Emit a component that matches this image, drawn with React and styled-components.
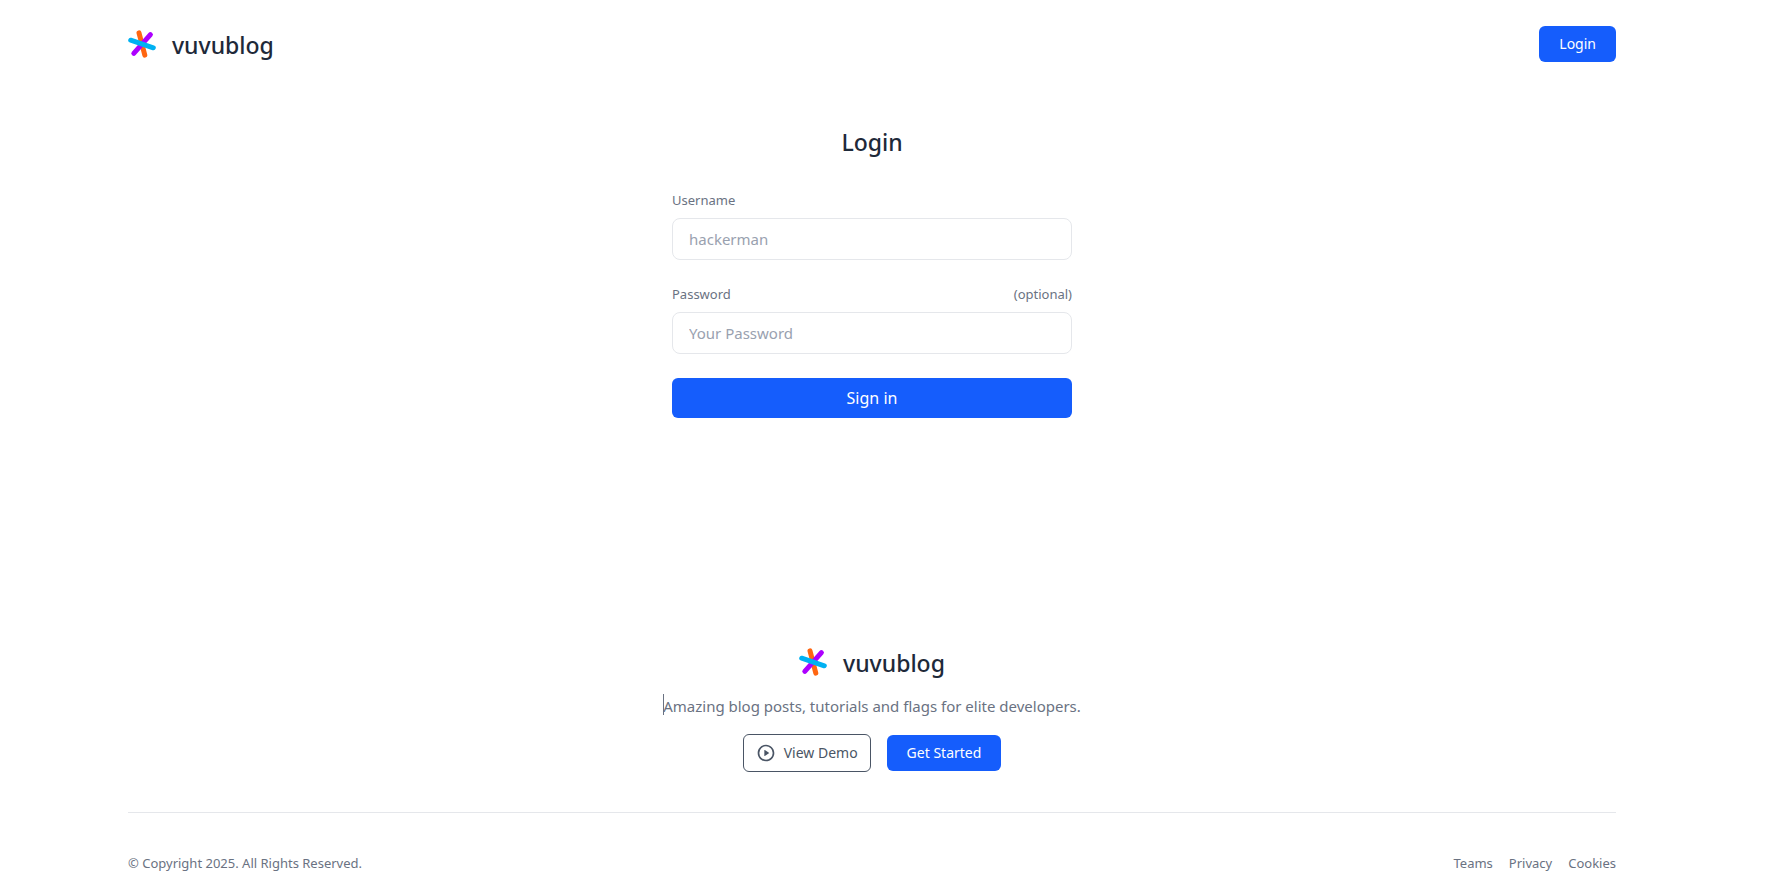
import React, { useState } from "react";
import styled, { createGlobalStyle } from "styled-components";

const GlobalStyle = createGlobalStyle`
  *, *::before, *::after {
    box-sizing: border-box;
  }

  body {
    margin: 0;
    background-color: #fff;
    font-family: "Segoe UI", "Noto Sans", "Open Sans", sans-serif;
    font-size: 15px;
    line-height: 24px;
    color: #6a7282;
  }

  button, input {
    font: inherit;
  }
`

const Page = styled.div`
  padding-right: 27px;
`

const Container = styled.div`
  max-width: 1536px;
  margin: 0 auto;
  padding: 0 24px;
`

const Header = styled.header`
  display: flex;
  align-items: center;
  justify-content: space-between;
  padding: 24px 0;
`

const Brand = styled.a`
  display: inline-flex;
  align-items: center;
  gap: 16px;
  height: 40px;
  color: #1e2939;
  font-size: 23px;
  font-weight: 500;
  text-decoration: none;
`

const BrandName = styled.span`
  padding-top: 2px;
`

const LogoIcon = styled.svg`
  width: 28px;
  height: 28px;
  fill: none;
  stroke-width: 5;
  stroke-linecap: round;
`

const Button = styled.button`
  height: 36px;
  padding: 0 20px;
  border: none;
  border-radius: 6px;
  background-color: #155dfc;
  color: #fff;
  font-size: 14px;
  cursor: pointer;
`

const SubmitButton = styled(Button)`
  width: 100%;
  height: 40px;
  font-size: 16px;
`

const OutlineButton = styled(Button)`
  display: flex;
  align-items: center;
  gap: 8px;
  height: 38px;
  padding: 0 12px;
  border: 1px solid #4a5565;
  background-color: #fff;
  color: #4a5565;
`

const LoginForm = styled.form`
  display: flex;
  flex-direction: column;
  gap: 24px;
  max-width: 400px;
  margin: 0 auto;
  padding: 38px 0 224px;
`

const Title = styled.h1`
  margin: 0 0 8px;
  color: #1e2939;
  font-size: 23px;
  font-weight: 500;
  line-height: 32px;
  text-align: center;
`

const FieldHead = styled.div`
  display: flex;
  justify-content: space-between;
  margin-bottom: 8px;
  font-size: 13px;
  line-height: 20px;
`

const Input = styled.input`
  display: block;
  width: 100%;
  height: 42px;
  padding: 0 16px;
  border: 1px solid #e5e7eb;
  border-radius: 8px;
  background-color: #fff;
  color: #364153;

  &::placeholder {
    color: #99a1af;
    opacity: 1;
  }
`

const FooterTop = styled.div`
  display: flex;
  flex-direction: column;
  align-items: center;
  padding-bottom: 40px;
`

const Tagline = styled.p`
  position: relative;
  margin: 12px 0 16px;

  &::before {
    content: "";
    position: absolute;
    top: 0;
    left: 0;
    width: 1px;
    height: 21px;
    background-color: #6a7282;
  }
`

const Actions = styled.div`
  display: flex;
  align-items: center;
  gap: 16px;
`

const FooterBottom = styled.div`
  display: flex;
  align-items: center;
  justify-content: space-between;
  padding: 38px 0 16px;
  border-top: 1px solid #e5e7eb;
  font-size: 13px;
`

const Copyright = styled.p`
  margin: 0;
`

const FooterLinks = styled.nav`
  display: flex;
  gap: 16px;
`

const FooterLink = styled.a`
  color: inherit;
  text-decoration: none;
`

function Logo() {
  return (
    <Brand href="#">
      <LogoIcon viewBox="0 0 28 28" aria-hidden="true">
        <path d="M11 2.8 16.8 25.2" stroke="#ff6611" />
        <path d="M22.4 4.6 5.8 23.4" stroke="#ad00ff" />
        <path d="M2.7 10.2 25.3 17.8" stroke="#00b1f2" />
      </LogoIcon>
      <BrandName>vuvublog</BrandName>
    </Brand>
  );
}

function PlayIcon() {
  return (
    <svg width="20" height="20" viewBox="0 0 24 24" fill="currentColor" aria-hidden="true">
      <path d="M12 22C6.477 22 2 17.523 2 12S6.477 2 12 2s10 4.477 10 10-4.477 10-10 10zm0-2a8 8 0 1 0 0-16 8 8 0 0 0 0 16zM10.622 8.415l4.879 3.252a.4.4 0 0 1 0 .666l-4.88 3.252a.4.4 0 0 1-.621-.332V8.747a.4.4 0 0 1 .622-.332z" />
    </svg>
  );
}

function Field({ id, label, hint, ...props }) {
  return (
    <div>
      <FieldHead>
        <label htmlFor={id}>{label}</label>
        {hint && <span>{hint}</span>}
      </FieldHead>
      <Input id={id} {...props} />
    </div>
  );
}

function App() {
  const [username, setUsername] = useState("");
  const [password, setPassword] = useState("");

  const handleFormSubmit = e => {
    e.preventDefault();
  }

  return (
    <Page>
      <GlobalStyle />
      <Container>
        <Header>
          <Logo />
          <Button type="button">Login</Button>
        </Header>
        <main>
          <LoginForm onSubmit={handleFormSubmit}>
            <Title>Login</Title>
            <Field
              id="username"
              label="Username"
              type="text"
              placeholder="hackerman"
              value={username}
              onChange={e => setUsername(e.target.value)}
            />
            <Field
              id="password"
              label="Password"
              hint="(optional)"
              type="password"
              placeholder="Your Password"
              value={password}
              onChange={e => setPassword(e.target.value)}
            />
            <SubmitButton type="submit">Sign in</SubmitButton>
          </LoginForm>
        </main>
        <footer>
          <FooterTop>
            <Logo />
            <Tagline>Amazing blog posts, tutorials and flags for elite developers.</Tagline>
            <Actions>
              <OutlineButton type="button">
                <PlayIcon />
                <span>View Demo</span>
              </OutlineButton>
              <Button type="button">Get Started</Button>
            </Actions>
          </FooterTop>
          <FooterBottom>
            <Copyright>© Copyright 2025. All Rights Reserved.</Copyright>
            <FooterLinks>
              <FooterLink href="#">Teams</FooterLink>
              <FooterLink href="#">Privacy</FooterLink>
              <FooterLink href="#">Cookies</FooterLink>
            </FooterLinks>
          </FooterBottom>
        </footer>
      </Container>
    </Page>
  );
}

export default App;
